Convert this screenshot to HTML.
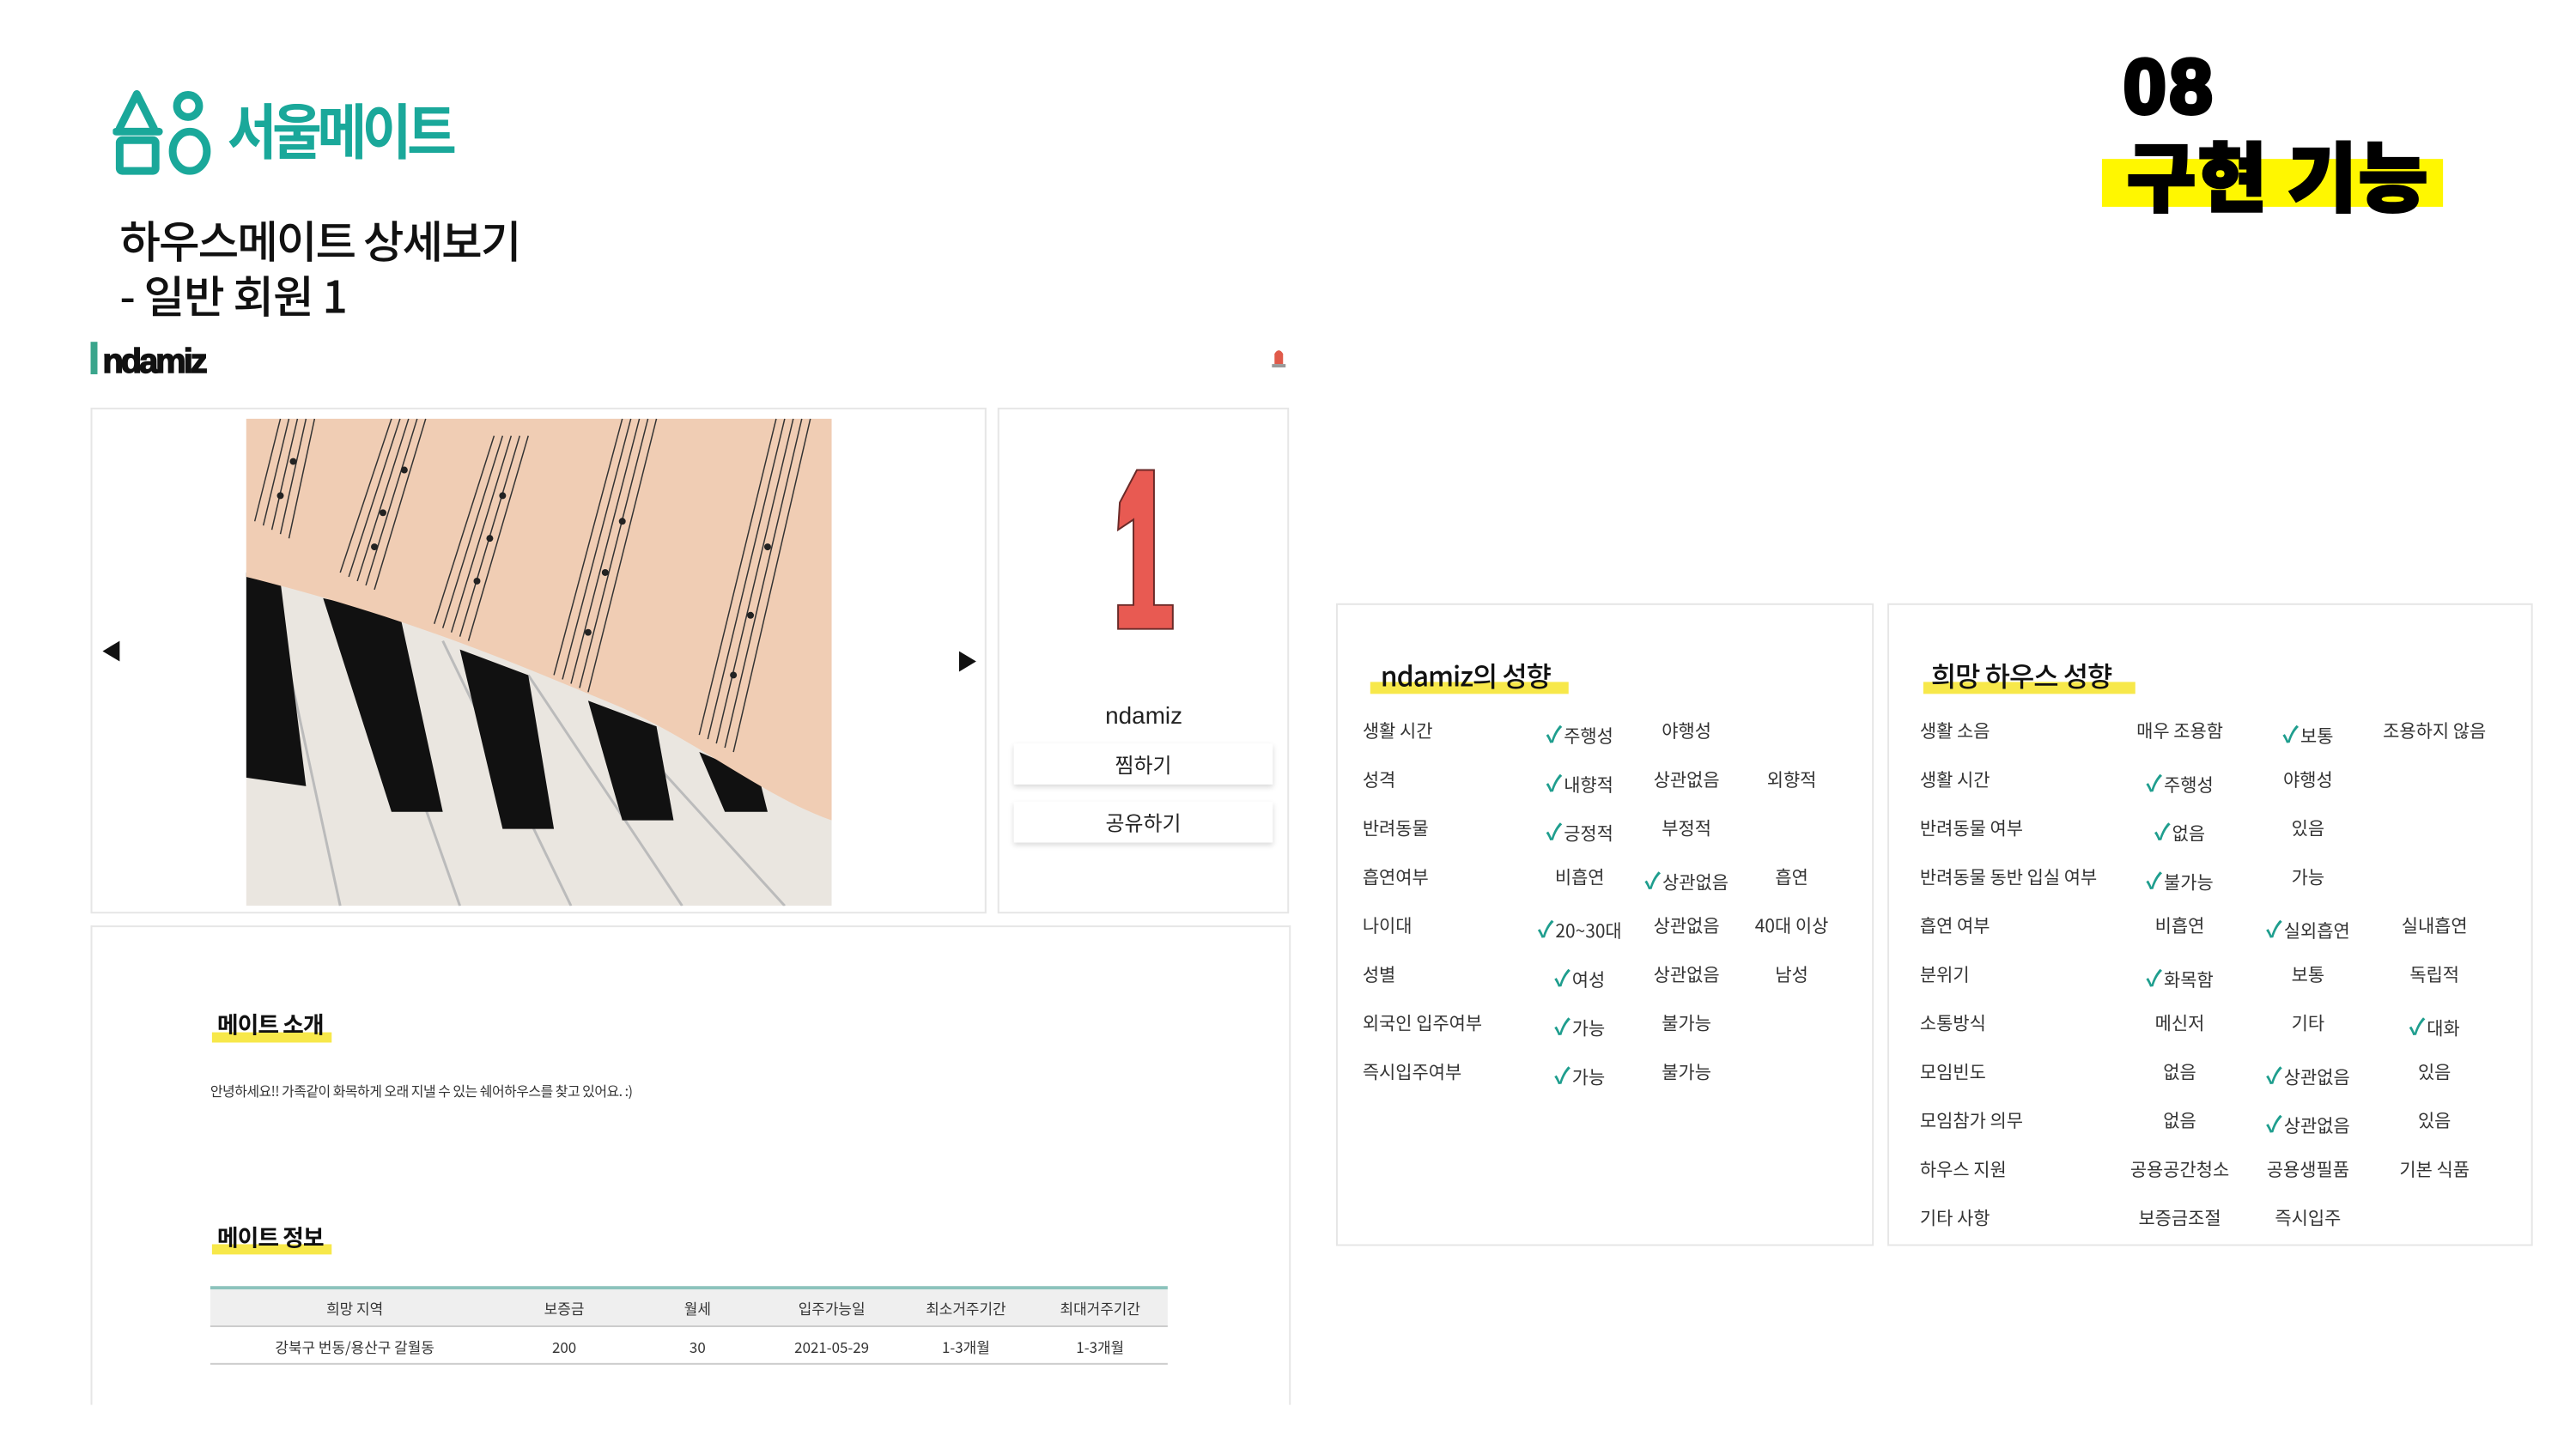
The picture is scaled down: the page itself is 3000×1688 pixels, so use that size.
<!DOCTYPE html>
<html><head><meta charset="utf-8">
<style>
*{margin:0;padding:0;box-sizing:border-box}
body{width:3000px;height:1688px;background:#fff;position:relative;overflow:hidden;font-family:"Liberation Sans","Noto Sans CJK KR",sans-serif;color:#222}
#w{position:absolute;left:0;top:0;width:3000px;height:1688px;transform:scale(0.9955);transform-origin:0 0}
.a{position:absolute;white-space:nowrap}
.panel{position:absolute;border:2px solid #e6e6e6;background:#fff}
.k{font-family:"Noto Sans CJK KR",sans-serif}
.hl{position:absolute;background:#f7e84a;height:12px}
.row{position:absolute;font-size:21px;color:#333;font-family:"Noto Sans CJK KR",sans-serif}
.c{position:absolute;transform:translateX(-50%);white-space:nowrap}
.ck{color:#1f9e8e;font-weight:700;font-size:26px;margin-right:2px}
.btn{position:absolute;left:1186px;width:303px;height:48px;background:#fff;box-shadow:0 3px 6px rgba(0,0,0,.15);text-align:center;line-height:48px;font-size:24px;font-family:"Noto Sans CJK KR",sans-serif}
</style></head><body><div id="w">

<svg class="a" style="left:132px;top:102px" width="120" height="104" viewBox="0 0 120 104">
<g fill="none" stroke="#1aa89a" stroke-width="9" stroke-linejoin="round" stroke-linecap="round">
<path d="M8 48 L28 8 L48 48"/>
<path d="M4 52 H54"/>
<rect x="8" y="62" width="42" height="36" rx="3"/>
<circle cx="88" cy="22" r="13"/>
<ellipse cx="90" cy="75" rx="20" ry="23"/>
</g></svg>
<div class="a k" style="left:266px;top:106px;font-size:70px;font-weight:700;color:#1aa89a;letter-spacing:-6px;line-height:90px;transform:scaleX(.9);transform-origin:left">서울메이트</div>

<div class="a k" style="left:140px;top:248px;font-size:52px;font-weight:500;color:#111;line-height:64px;letter-spacing:-2px">하우스메이트 상세보기</div>
<div class="a k" style="left:140px;top:312px;font-size:52px;font-weight:500;color:#111;line-height:64px;letter-spacing:-1px">- 일반 회원 1</div>

<div class="a" style="left:2484px;top:52px;font-size:90px;font-weight:900;color:#000;line-height:100px;font-family:'Liberation Sans',sans-serif;-webkit-text-stroke:5px #000;letter-spacing:4px">08</div>
<div class="a" style="left:2459px;top:186px;width:399px;height:56px;background:#fff700"></div>
<div class="a k" style="left:2488px;top:148px;font-size:88px;font-weight:900;color:#000;line-height:110px;-webkit-text-stroke:3px #000;letter-spacing:2px">구현 기능</div>

<div class="a" style="left:106px;top:400px;width:8px;height:38px;background:#3aa58c"></div>
<div class="a" style="left:120px;top:398px;font-size:40px;font-weight:700;color:#111;letter-spacing:-3px;line-height:50px;-webkit-text-stroke:1.5px #111">ndamiz</div>
<svg class="a" style="left:1486px;top:406px" width="20" height="28" viewBox="0 0 20 28"><path d="M5 20 V8 Q10 0 15 8 V20Z" fill="#e05a4a"/><rect x="2" y="20" width="16" height="4" fill="#999"/></svg>

<div class="panel" style="left:106px;top:477px;width:1048px;height:592px"></div>
<svg class="a" style="left:118px;top:748px" width="24" height="28"><path d="M22 2 L2 14 L22 26Z" fill="#111"/></svg>
<svg class="a" style="left:1120px;top:760px" width="24" height="28"><path d="M2 2 L22 14 L2 26Z" fill="#111"/></svg>
<svg class="a" style="left:288px;top:490px" width="685" height="570" viewBox="0 0 685 570">
<rect width="685" height="570" fill="#eae6e0"/>
<g stroke="#bbb" stroke-width="3">
<path d="M30 200 L110 570"/><path d="M130 230 L250 570"/><path d="M230 260 L380 570"/><path d="M330 300 L510 570"/><path d="M430 350 L630 570"/>
</g>
<g fill="#111">
<path d="M0 180 L40 190 L70 430 L0 420Z"/>
<path d="M90 210 L180 230 L230 460 L170 460Z"/>
<path d="M250 270 L330 300 L360 480 L300 480Z"/>
<path d="M400 330 L480 360 L500 470 L440 470Z"/>
<path d="M530 390 L600 420 L610 460 L560 460Z"/>
</g>
<path d="M0 0 H685 V470 C600 440 520 370 420 330 C300 280 180 230 0 185Z" fill="#f0cdb4"/>
<g stroke="#333" stroke-width="1.5" fill="none">
<path d="M40 0 L10 120"/><path d="M50 0 L20 125"/><path d="M60 0 L30 130"/><path d="M70 0 L40 135"/><path d="M80 0 L50 140"/>
<path d="M170 0 L110 180"/><path d="M180 0 L120 185"/><path d="M190 0 L130 190"/><path d="M200 0 L140 195"/><path d="M210 0 L150 200"/>
<path d="M290 20 L220 240"/><path d="M300 20 L230 245"/><path d="M310 20 L240 250"/><path d="M320 20 L250 255"/><path d="M330 20 L260 260"/>
<path d="M440 0 L360 300"/><path d="M450 0 L370 305"/><path d="M460 0 L380 310"/><path d="M470 0 L390 315"/><path d="M480 0 L400 320"/>
<path d="M620 0 L530 370"/><path d="M630 0 L540 375"/><path d="M640 0 L550 380"/><path d="M650 0 L560 385"/><path d="M660 0 L570 390"/>
</g>
<g fill="#222">
<circle cx="55" cy="50" r="4"/><circle cx="40" cy="90" r="4"/><circle cx="185" cy="60" r="4"/><circle cx="160" cy="110" r="4"/><circle cx="150" cy="150" r="4"/>
<circle cx="300" cy="90" r="4"/><circle cx="285" cy="140" r="4"/><circle cx="270" cy="190" r="4"/><circle cx="440" cy="120" r="4"/><circle cx="420" cy="180" r="4"/>
<circle cx="400" cy="250" r="4"/><circle cx="610" cy="150" r="4"/><circle cx="590" cy="230" r="4"/><circle cx="570" cy="300" r="4"/>
</g>
</svg>

<div class="panel" style="left:1167px;top:477px;width:341px;height:592px"></div>
<svg class="a" style="left:1300px;top:548px" width="80" height="192" viewBox="0 0 80 192"><path d="M30 2 L50 2 L50 160 L72 160 L72 188 L8 188 L8 160 L26 160 L26 60 L8 72 L10 40 Z" fill="#e85a52" stroke="#6a2a28" stroke-width="2"/></svg>
<div class="a" style="left:1293px;top:820px;font-size:28px;color:#222;line-height:36px">ndamiz</div>
<div class="btn" style="top:870px">찜하기</div>
<div class="btn" style="top:938px">공유하기</div>

<div class="panel" style="left:106px;top:1083px;width:1404px;height:561px;border-bottom:none"></div>
<div class="hl" style="left:248px;top:1208px;width:140px"></div>
<div class="a k" style="left:254px;top:1180px;font-size:27px;font-weight:700;color:#111;line-height:36px;letter-spacing:-1px">메이트 소개</div>
<div class="a k" style="left:246px;top:1264px;font-size:16px;color:#333;line-height:24px;letter-spacing:-0.5px">안녕하세요!! 가족같이 화목하게 오래 지낼 수 있는 쉐어하우스를 찾고 있어요. :)</div>
<div class="hl" style="left:248px;top:1456px;width:140px"></div>
<div class="a k" style="left:254px;top:1429px;font-size:27px;font-weight:700;color:#111;line-height:36px;letter-spacing:-1px">메이트 정보</div>
<div class="a" style="left:246px;top:1505px;width:1120px;height:4px;background:#8cc3bc"></div>
<div class="a" style="left:246px;top:1509px;width:1120px;height:44px;background:#efefef;border-bottom:2px solid #ccc"></div>
<div class="a" style="left:246px;top:1595px;width:1120px;height:2px;background:#ccc"></div>
<div class="row" style="left:0;top:1518px;font-size:17px">
<span class="c" style="left:415px">희망 지역</span><span class="c" style="left:660px">보증금</span><span class="c" style="left:816px">월세</span><span class="c" style="left:973px">입주가능일</span><span class="c" style="left:1130px">최소거주기간</span><span class="c" style="left:1287px">최대거주기간</span></div>
<div class="row" style="left:0;top:1563px;font-size:17px">
<span class="c" style="left:415px">강북구 번동/용산구 갈월동</span><span class="c" style="left:660px">200</span><span class="c" style="left:816px">30</span><span class="c" style="left:973px">2021-05-29</span><span class="c" style="left:1130px">1-3개월</span><span class="c" style="left:1287px">1-3개월</span></div>

<div class="panel" style="left:1563px;top:706px;width:629px;height:752px"></div>
<div class="hl" style="left:1603px;top:798px;width:232px;height:14px"></div>
<div class="a k" style="left:1615px;top:768px;font-size:32px;font-weight:500;color:#111;line-height:44px;letter-spacing:-1px">ndamiz의 성향</div>

<div class="panel" style="left:2208px;top:706px;width:755px;height:752px"></div>
<div class="hl" style="left:2250px;top:798px;width:248px;height:14px"></div>
<div class="a k" style="left:2259px;top:768px;font-size:32px;font-weight:500;color:#111;line-height:44px;letter-spacing:-1px">희망 하우스 성향</div>

<div class="row" style="left:0;top:840px"><span class="a" style="left:1594px">생활 시간</span><span class="c" style="left:1848px"><b class="ck">✓</b>주행성</span><span class="c" style="left:1973px">야행성</span></div>
<div class="row" style="left:0;top:897px"><span class="a" style="left:1594px">성격</span><span class="c" style="left:1848px"><b class="ck">✓</b>내향적</span><span class="c" style="left:1973px">상관없음</span><span class="c" style="left:2096px">외향적</span></div>
<div class="row" style="left:0;top:954px"><span class="a" style="left:1594px">반려동물</span><span class="c" style="left:1848px"><b class="ck">✓</b>긍정적</span><span class="c" style="left:1973px">부정적</span></div>
<div class="row" style="left:0;top:1011px"><span class="a" style="left:1594px">흡연여부</span><span class="c" style="left:1848px">비흡연</span><span class="c" style="left:1973px"><b class="ck">✓</b>상관없음</span><span class="c" style="left:2096px">흡연</span></div>
<div class="row" style="left:0;top:1068px"><span class="a" style="left:1594px">나이대</span><span class="c" style="left:1848px"><b class="ck">✓</b>20~30대</span><span class="c" style="left:1973px">상관없음</span><span class="c" style="left:2096px">40대 이상</span></div>
<div class="row" style="left:0;top:1125px"><span class="a" style="left:1594px">성별</span><span class="c" style="left:1848px"><b class="ck">✓</b>여성</span><span class="c" style="left:1973px">상관없음</span><span class="c" style="left:2096px">남성</span></div>
<div class="row" style="left:0;top:1182px"><span class="a" style="left:1594px">외국인 입주여부</span><span class="c" style="left:1848px"><b class="ck">✓</b>가능</span><span class="c" style="left:1973px">불가능</span></div>
<div class="row" style="left:0;top:1239px"><span class="a" style="left:1594px">즉시입주여부</span><span class="c" style="left:1848px"><b class="ck">✓</b>가능</span><span class="c" style="left:1973px">불가능</span></div>

<div class="row" style="left:0;top:840px"><span class="a" style="left:2246px">생활 소음</span><span class="c" style="left:2550px">매우 조용함</span><span class="c" style="left:2700px"><b class="ck">✓</b>보통</span><span class="c" style="left:2848px">조용하지 않음</span></div>
<div class="row" style="left:0;top:897px"><span class="a" style="left:2246px">생활 시간</span><span class="c" style="left:2550px"><b class="ck">✓</b>주행성</span><span class="c" style="left:2700px">야행성</span></div>
<div class="row" style="left:0;top:954px"><span class="a" style="left:2246px">반려동물 여부</span><span class="c" style="left:2550px"><b class="ck">✓</b>없음</span><span class="c" style="left:2700px">있음</span></div>
<div class="row" style="left:0;top:1011px"><span class="a" style="left:2246px">반려동물 동반 입실 여부</span><span class="c" style="left:2550px"><b class="ck">✓</b>불가능</span><span class="c" style="left:2700px">가능</span></div>
<div class="row" style="left:0;top:1068px"><span class="a" style="left:2246px">흡연 여부</span><span class="c" style="left:2550px">비흡연</span><span class="c" style="left:2700px"><b class="ck">✓</b>실외흡연</span><span class="c" style="left:2848px">실내흡연</span></div>
<div class="row" style="left:0;top:1125px"><span class="a" style="left:2246px">분위기</span><span class="c" style="left:2550px"><b class="ck">✓</b>화목함</span><span class="c" style="left:2700px">보통</span><span class="c" style="left:2848px">독립적</span></div>
<div class="row" style="left:0;top:1182px"><span class="a" style="left:2246px">소통방식</span><span class="c" style="left:2550px">메신저</span><span class="c" style="left:2700px">기타</span><span class="c" style="left:2848px"><b class="ck">✓</b>대화</span></div>
<div class="row" style="left:0;top:1239px"><span class="a" style="left:2246px">모임빈도</span><span class="c" style="left:2550px">없음</span><span class="c" style="left:2700px"><b class="ck">✓</b>상관없음</span><span class="c" style="left:2848px">있음</span></div>
<div class="row" style="left:0;top:1296px"><span class="a" style="left:2246px">모임참가 의무</span><span class="c" style="left:2550px">없음</span><span class="c" style="left:2700px"><b class="ck">✓</b>상관없음</span><span class="c" style="left:2848px">있음</span></div>
<div class="row" style="left:0;top:1353px"><span class="a" style="left:2246px">하우스 지원</span><span class="c" style="left:2550px">공용공간청소</span><span class="c" style="left:2700px">공용생필품</span><span class="c" style="left:2848px">기본 식품</span></div>
<div class="row" style="left:0;top:1410px"><span class="a" style="left:2246px">기타 사항</span><span class="c" style="left:2550px">보증금조절</span><span class="c" style="left:2700px">즉시입주</span></div>

</div></body></html>
